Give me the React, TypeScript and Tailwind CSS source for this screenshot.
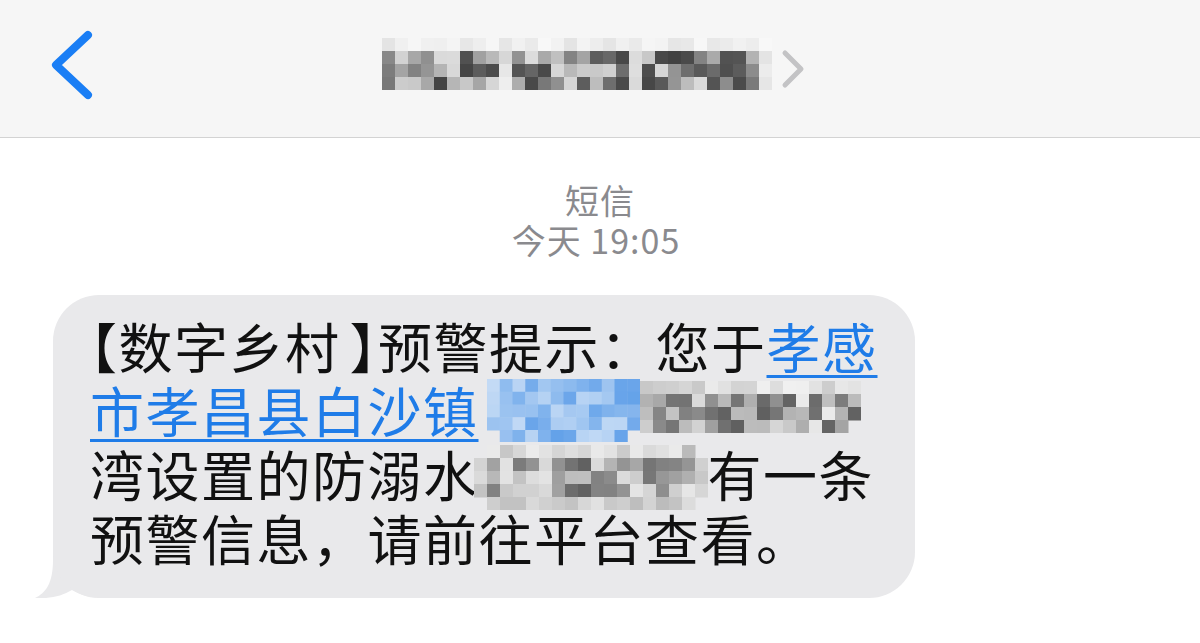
import React from "react";

function rng(seed: number) {
  let s = seed % 2147483647;
  if (s <= 0) s += 2147483646;
  return () => {
    s = (s * 16807) % 2147483647;
    return (s - 1) / 2147483646;
  };
}

type ColorFn = (r: number, c: number, rand: () => number) => string | null;

function Mosaic({
  cols,
  rows,
  cell,
  seed,
  color,
  className,
}: {
  cols: number;
  rows: number;
  cell: number;
  seed: number;
  color: ColorFn;
  className?: string;
}) {
  const rand = rng(seed);
  const rects: React.ReactElement[] = [];
  for (let r = 0; r < rows; r++) {
    for (let c = 0; c < cols; c++) {
      const col = color(r, c, rand);
      if (col) {
        rects.push(
          <rect key={`${r}-${c}`} x={c * cell} y={r * cell} width={cell + 0.5} height={cell + 0.5} fill={col} />
        );
      }
    }
  }
  return (
    <svg width={cols * cell} height={rows * cell} className={className} style={{ display: "block" }}>
      {rects}
    </svg>
  );
}

const gray = (v: number) => {
  const n = Math.max(0, Math.min(255, Math.round(v)));
  return `rgb(${n},${n},${n})`;
};

const headerColor: ColorFn = (r, c, rand) => {
  const x = rand();
  if (r === 0) return gray(228 + x * 20);
  if (c === 9 || c === 19 || c === 29) return gray(215 + x * 25);
  if (c === 0) return r === 3 ? gray(120) : gray(90 + x * 60);
  return gray(60 + x * 160);
};

const blueColor: ColorFn = (r, c, rand) => {
  const x = rand();
  if (r === 4 && (c === 0 || c === 11)) return null;
  const mix = 0.25 + x * 0.6;
  const R = Math.round(235 - mix * 160);
  const G = Math.round(242 - mix * 95);
  const B = Math.round(250 - mix * 20);
  return `rgb(${R},${G},${B})`;
};

const grayColor2: ColorFn = (r, c, rand) => {
  const x = rand();
  if (r === 0) return gray(200 + x * 40);
  if (c === 16 && r > 2) return null;
  return gray(95 + x * 140);
};

const line3Color: ColorFn = (r, c, rand) => {
  const x = rand();
  const edge = (r === 0 || r === 4) && (c < 1 || c > 16);
  if (edge) return null;
  if (r === 0 || r === 4) return gray(185 + x * 50);
  if (c === 0 || c === 17) return gray(195 + x * 35);
  return gray(80 + x * 150);
};

const FONT = { fontFamily: '"Noto Sans CJK SC", "Noto Sans", sans-serif' };

export default function App() {
  return (
    <div className="w-[1200px] h-[643px] bg-white overflow-hidden" style={FONT}>
      {/* Header */}
      <div className="h-[138px] bg-[#f6f6f6] border-b border-[#d3d3d3] flex items-center">
        <svg width="60" height="80" viewBox="0 0 60 80" className="ml-[43px]">
          <polyline
            points="45,6 13,36 45,66"
            fill="none"
            stroke="#1a7ef5"
            strokeWidth="8"
            strokeLinecap="round"
            strokeLinejoin="round"
          />
        </svg>
        <div className="ml-[279px] mb-[9px] flex items-center">
          <Mosaic cols={30} rows={4} cell={13} seed={917} color={headerColor} />
          <svg width="30" height="44" viewBox="0 0 30 44" className="ml-[8px] mt-[12px]">
            <polyline
              points="5,5 21,21 5,37"
              fill="none"
              stroke="#c3c3c5"
              strokeWidth="5"
              strokeLinecap="round"
              strokeLinejoin="round"
            />
          </svg>
        </div>
      </div>

      {/* Timestamp */}
      <div className="mt-[42px] flex flex-col items-center text-[#8a8a8e] leading-[40px]">
        <div className="text-[34px] tracking-[1px]">短信</div>
        <div className="text-[34px] tracking-[1px] ml-[-8px]">今天 19:05</div>
      </div>

      {/* Bubble */}
      <div className="mt-[35px] ml-[53px] w-[862px] relative">
        <svg
          width="70"
          height="50"
          viewBox="35 548 70 50"
          className="absolute left-[-18px] bottom-0"
        >
          <path
            d="M53,548 L53,560 C53,583 46,593 35,598 C50,599 62,596 72,590 C80,595 90,598 105,598 L105,548 Z"
            fill="#e9e9eb"
          />
        </svg>
        <div className="relative rounded-[46px] bg-[#e9e9eb] pl-[37px] pt-[19px] pb-[28px] text-[54px] leading-[64px] tracking-[1.5px] text-[#111111]">
          <div className="h-[64px] flex items-center whitespace-nowrap">
            <span className="[font-feature-settings:'halt']">【</span>
            <span>数字乡村</span>
            <span className="ml-[9px] [font-feature-settings:'halt']">】</span>
            <span>预警提示：您于</span>
            <span className="text-[#1f7ce8] underline decoration-[3px] underline-offset-[6px]">孝感</span>
          </div>
          <div className="h-[64px] flex items-center whitespace-nowrap">
            <span className="text-[#1f7ce8] underline decoration-[3px] underline-offset-[6px]">市孝昌县白沙镇</span>
            <div className="ml-[8px] mt-[1px]">
              <Mosaic cols={12} rows={5} cell={12.75} seed={331} color={blueColor} />
            </div>
            <div className="mb-[6px]">
              <Mosaic cols={17} rows={4} cell={13} seed={77} color={grayColor2} />
            </div>
          </div>
          <div className="h-[64px] flex items-center whitespace-nowrap">
            <span>湾设置的防溺水</span>
            <div className="ml-[-5px] mt-[6px]">
              <Mosaic cols={18} rows={5} cell={13} seed={4242} color={line3Color} />
            </div>
            <span>有一条</span>
          </div>
          <div className="h-[64px] flex items-center whitespace-nowrap">
            <span>预警信息，请前往平台查看。</span>
          </div>
        </div>
      </div>
    </div>
  );
}
